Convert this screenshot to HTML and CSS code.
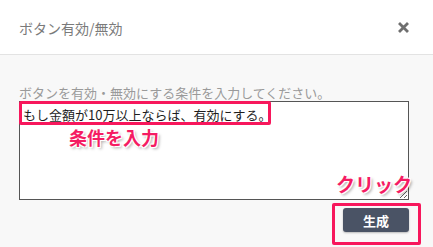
FILE: index.html
```html
<!DOCTYPE html>
<html lang="ja">
<head>
<meta charset="utf-8">
<link rel="stylesheet" href="styles.css">
</head>
<body>
<div class="modal">
  <div class="modal-header">
    <div class="modal-title">ボタン有効/無効</div>
    <svg class="close" width="11" height="11" viewBox="0 0 11 11"><path d="M2 2 L9 9 M9 2 L2 9" stroke="#6f6f6f" stroke-width="2.8" stroke-linecap="square"/></svg>
  </div>
  <div class="modal-body">
    <div class="label">ボタンを有効・無効にする条件を入力してください。</div>
    <div class="field">
      <textarea class="input">もし金額が10万以上ならば、有効にする。</textarea>
      <div class="hl hl-text"></div>
      <div class="note note-input">条件を入力</div>
      <div class="note note-click">クリック</div>
    </div>
    <div class="actions">
      <div class="btn-wrap">
        <button class="btn">生成</button>
        <div class="hl hl-btn"></div>
      </div>
    </div>
  </div>
</div>
</body>
</html>
```
FILE: styles.css
```css
html, body {
  margin: 0;
  padding: 0;
  background: #f8f8f8;
  font-family: "Noto Sans CJK JP", "Noto Sans", sans-serif;
}
.modal {
  width: 433px;
  height: 247px;
  overflow: hidden;
}
.modal-header {
  height: 55px;
  background: #fff;
  border-bottom: 1px solid #e3e3e3;
  box-sizing: border-box;
  display: flex;
  align-items: center;
  justify-content: space-between;
  padding: 0 24px 0 19px;
}
.modal-title {
  font-size: 14px;
  color: #7a7a7a;
  line-height: 20px;
  margin-top: 1px;
}
.close {
  display: block;
  margin-top: 1px;
}
.modal-body {
  padding: 29px 24px 0 19px;
  display: flex;
  flex-direction: column;
}
.label {
  font-size: 13px;
  line-height: 17px;
  color: #9a9a9a;
}
.field {
  position: relative;
  height: 99px;
}
.input {
  display: block;
  width: 390px;
  height: 99px;
  box-sizing: border-box;
  margin: 0;
  border: 1px solid #555;
  border-radius: 0;
  background: #fff;
  padding: 4px 3px;
  font-family: "Noto Sans CJK JP", sans-serif;
  font-size: 13px;
  line-height: 18px;
  color: #1e1e1e;
  resize: vertical;
}
.hl {
  position: absolute;
  border: 3px solid #f7175c;
  border-radius: 2px;
  box-sizing: border-box;
}
.hl-text {
  left: 0;
  top: 0;
  width: 252px;
  height: 24px;
}
.note {
  position: absolute;
  font-weight: bold;
  color: #f51c63;
  text-shadow: -1px -1px 0 #fff, 1px -1px 0 #fff, -1px 1px 0 #fff, 1px 1px 0 #fff, 2px 2px 3px rgba(0,0,0,0.35);
  white-space: nowrap;
}
.note-input {
  left: 50px;
  top: 24px;
  font-size: 18px;
  line-height: 24px;
}
.note-click {
  left: 317px;
  top: 71px;
  font-size: 19px;
  line-height: 24px;
}
.actions {
  display: flex;
  justify-content: flex-end;
  margin-top: 8px;
}
.btn-wrap {
  position: relative;
}
.btn {
  display: block;
  width: 66px;
  height: 24px;
  border: none;
  border-radius: 3px;
  background: #4a5365;
  color: #fff;
  font-family: "Noto Sans CJK JP", sans-serif;
  font-size: 13px;
  font-weight: bold;
  padding: 0;
  box-shadow: 0 1px 2px rgba(0,0,0,0.25);
}
.hl-btn {
  left: -11px;
  top: -5px;
  width: 89px;
  height: 42px;
}
```
